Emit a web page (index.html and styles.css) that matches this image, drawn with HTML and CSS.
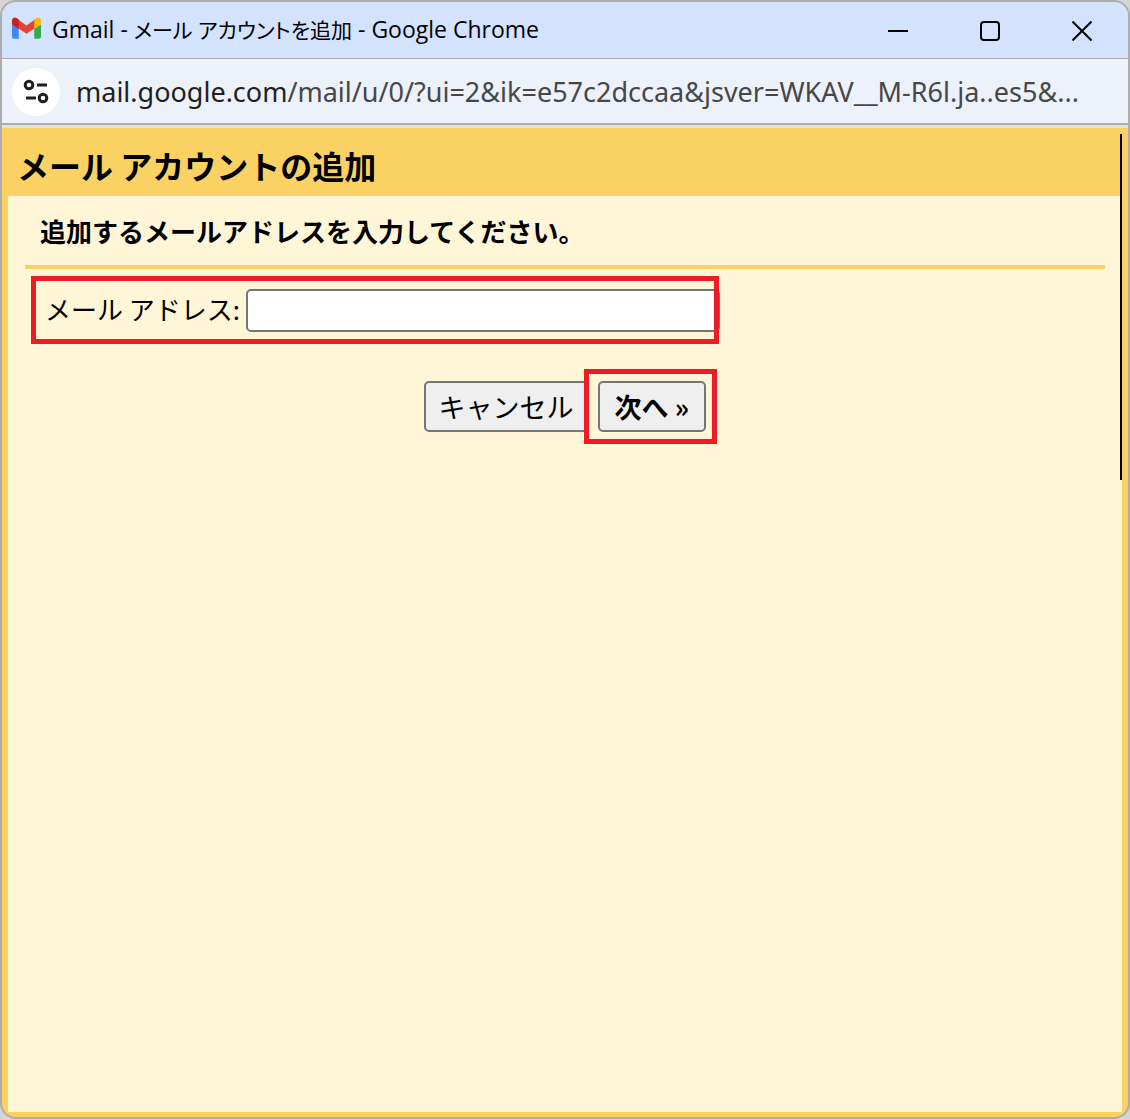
FILE: index.html
```html
<!DOCTYPE html>
<html lang="ja">
<head>
<meta charset="utf-8">
<meta name="viewport" content="width=device-width, initial-scale=1">
<title>Gmail - メール アカウントを追加</title>
<link rel="stylesheet" href="styles.css">
</head>
<body>
<div class="window">
  <header class="titlebar">
    <svg class="gmail" viewBox="0 0 30 22" aria-hidden="true">
      <path fill="#4285f4" d="M0 7l7 4v11H2q-2 0-2-2z"/>
      <path fill="#34a853" d="M23 11l7-4v13q0 2-2 2h-5z"/>
      <path fill="#ea4335" d="M6 2l9 6.500L24 2v9l-9 6-9-6z"/>
      <path fill="#c5221f" d="M0 3C0 .4 3-.8 5.200.8L7 2.200V12L0 7.500z"/>
      <path fill="#fbbc04" d="M30 3C30 .4 27-.8 24.800.8L23 2.200V12l7-4.500z"/>
    </svg>
    <span class="window-title">Gmail - <span class="title-ja">メール アカウントを追加</span> - Google Chrome</span>
    <div class="window-controls">
      <button type="button" class="control" aria-label="最小化"><svg viewBox="0 0 20 20"><path d="M0 10h20"/></svg></button>
      <button type="button" class="control" aria-label="最大化"><svg viewBox="0 0 20 20"><rect x="1" y="1" width="18" height="18" rx="3"/></svg></button>
      <button type="button" class="control" aria-label="閉じる"><svg viewBox="0 0 20 20"><path d="M.5.5l19 19M19.500.5l-19 19"/></svg></button>
    </div>
  </header>
  <div class="addressbar">
    <button type="button" class="site-info" aria-label="サイト情報を表示">
      <svg viewBox="0 0 48 48"><circle cx="17" cy="17" r="3.800"/><path d="M25 17h10M14 30h10"/><circle cx="31" cy="30" r="3.800"/></svg>
    </button>
    <span class="url"><span class="host">mail.google.com</span>/mail/u/0/?ui=2&amp;ik=e57c2dccaa&amp;jsver=WKAV__M-R6l.ja..es5&amp;...</span>
  </div>
  <main class="page">
    <h1 class="page-title">メール アカウントの追加</h1>
    <form class="panel">
      <h2 class="prompt">追加するメールアドレスを入力してください。</h2>
      <div class="field marked">
        <label for="email">メール アドレス:</label>
        <input id="email" class="email" type="text">
      </div>
      <div class="actions">
        <button type="button" class="button">キャンセル</button>
        <span class="next marked"><button type="submit" class="button primary">次へ »</button></span>
      </div>
    </form>
    <div class="edge-line"></div>
  </main>
</div>
</body>
</html>
```
FILE: styles.css
```css
* {
  box-sizing: border-box;
}

body {
  margin: 0;
  background: #d4d4d4;
  font-family: "Noto Sans", "Noto Sans CJK JP", sans-serif;
  color: #000;
}

button {
  font: inherit;
  color: inherit;
}

.window {
  display: flex;
  flex-direction: column;
  min-height: 100vh;
  border: 2px solid #adadad;
  border-radius: 16px;
  overflow: hidden;
  background: #fad163;
}

.titlebar {
  display: flex;
  align-items: center;
  height: 57px;
  padding-left: 10px;
  border-bottom: 1px solid #adadad;
  background: #d3e3fd;
}

.gmail {
  width: 29px;
  height: 22px;
  flex: none;
  margin: 0 11px 4px 0;
}

.window-title {
  flex: 1;
  overflow: hidden;
  padding-bottom: 2px;
  font-family: "Open Sans", "Noto Sans CJK JP", sans-serif;
  font-size: 23px;
  line-height: 32px;
  white-space: nowrap;
}

.title-ja {
  font-size: 21px;
  font-feature-settings: "palt";
}

.window-controls {
  display: flex;
}

.control {
  display: flex;
  align-items: center;
  justify-content: center;
  width: 92px;
  height: 56px;
  padding: 2px 0 0;
  border: 0;
  background: none;
}

.control svg {
  width: 20px;
  height: 20px;
  fill: none;
  stroke: #000;
  stroke-width: 2;
}

.addressbar {
  display: flex;
  align-items: center;
  gap: 16px;
  height: 66px;
  padding: 2px 10px 0;
  border-bottom: 2px solid #adadad;
  background: #ecf1fa;
}

.site-info {
  flex: none;
  width: 48px;
  height: 48px;
  padding: 0;
  border: 0;
  border-radius: 50%;
  background: #fff;
}

.site-info svg {
  display: block;
  fill: none;
  stroke: #1f1f1f;
  stroke-width: 3;
}

.url {
  overflow: hidden;
  font-family: "Noto Sans", sans-serif;
  font-size: 27px;
  line-height: 36px;
  white-space: nowrap;
  color: #474747;
}

.host {
  color: #1f1f1f;
}

.page {
  position: relative;
  display: flex;
  flex: 1;
  flex-direction: column;
  padding: 0 6px 5px;
  border-top: 3px solid #e3e3e3;
}

.page-title {
  margin: 0;
  padding: 17px 9px 11px;
  font-family: "Noto Sans CJK JP", sans-serif;
  font-size: 32px;
  line-height: 40px;
}

.panel {
  flex: 1;
  padding: 0 17px;
  background: #fff6d8;
  font-family: "Noto Sans CJK JP", sans-serif;
  font-size: 26px;
  line-height: 36px;
}

.prompt {
  margin: 0;
  padding: 17px 15px 16px;
  border-bottom: 4px solid #fad163;
  font-size: 26px;
}

.marked {
  position: relative;
  display: flex;
  align-items: center;
}

.marked::after {
  content: "";
  position: absolute;
  inset: 0;
  border: 5px solid #ed1c24;
  pointer-events: none;
}

.field {
  gap: 6px;
  width: 688px;
  height: 68px;
  margin: 7px 0 0 6px;
  padding-left: 14px;
}

.field label {
  padding-bottom: 2px;
}

.email {
  flex: 1;
  min-width: 0;
  height: 43px;
  margin-right: -1px;
  padding: 0 8px;
  border: 2px solid #767676;
  border-radius: 5px;
  background: #fff;
  font: inherit;
}

.actions {
  display: flex;
  align-items: center;
  justify-content: flex-end;
  width: 692px;
  margin-top: 25px;
}

.button {
  height: 51px;
  padding: 0 13px;
  border: 2px solid #767676;
  border-radius: 5px;
  background: #efefef;
  font-size: 27px;
  white-space: nowrap;
}

.next {
  margin-left: -5px;
  padding: 12px 11px 12px 14px;
}

.primary {
  padding: 0 15px;
  font-weight: 700;
}

.edge-line {
  position: absolute;
  top: 6px;
  right: 6px;
  width: 2px;
  height: 346px;
  background: #000;
}
```
